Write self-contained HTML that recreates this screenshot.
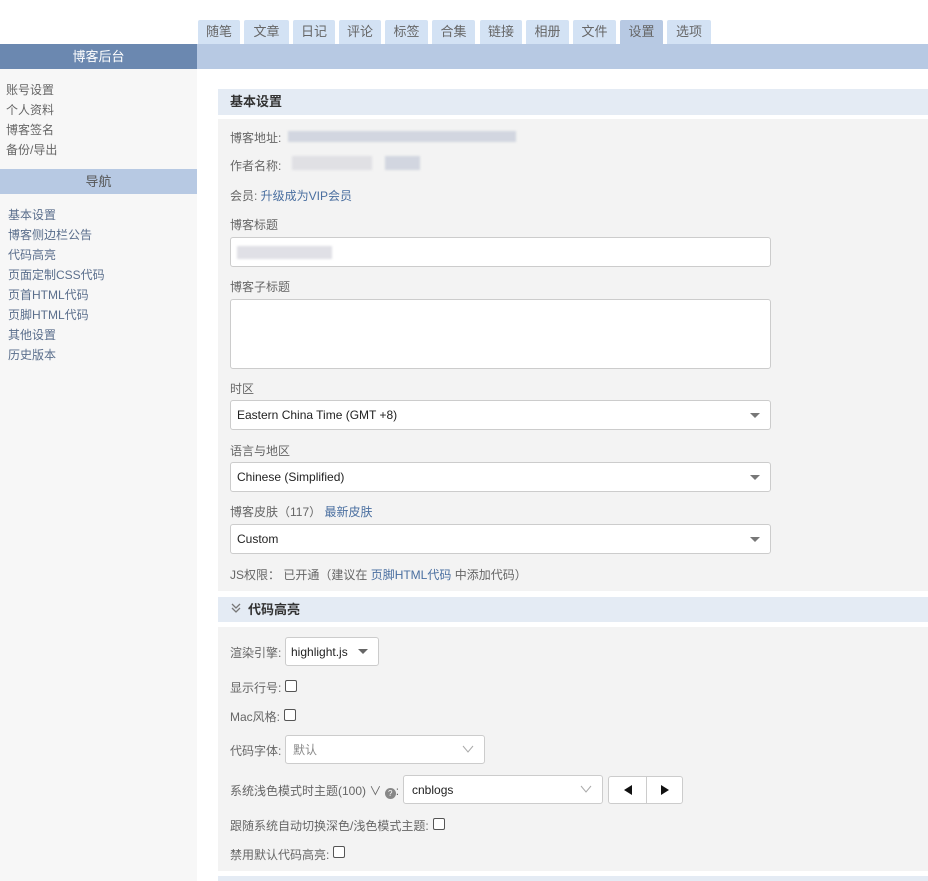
<!DOCTYPE html><html><head><meta charset="utf-8"><style>
*{margin:0;padding:0;box-sizing:border-box}
body{width:928px;height:881px;position:relative;background:#fff;font-family:"Liberation Sans","Noto Sans CJK SC",sans-serif;font-size:12px;color:#555;overflow:hidden}
.a{position:absolute}
.tab{position:absolute;top:20px;height:24px;width:42px;background:#d3e2f4;text-align:center;line-height:24px;font-size:13px;color:#666;border-radius:2px 2px 0 0}
.lk{position:absolute;left:6px;font-size:12px;color:#666}
.nv{position:absolute;left:8px;font-size:12px;color:#5a6e8c}
.lb{position:absolute;left:230px;font-size:12px;color:#666}
.in{position:absolute;left:230px;width:541px;height:30px;background:#fff;border:1px solid #ccc;border-radius:3px;font-size:12px;color:#222;padding-left:6px;line-height:28px}
.tri{position:absolute;right:10px;top:12px;width:0;height:0;border-left:5px solid transparent;border-right:5px solid transparent;border-top:5px solid #777}
.cb{position:absolute;width:12px;height:12px;border:1px solid #555;border-radius:2px;background:#fff}
.blur{position:absolute;background:#d2d6e0;filter:blur(1px)}
</style></head><body>
<div class="tab" style="left:198px">随笔</div><div class="tab" style="left:244px;width:45px">文章</div><div class="tab" style="left:293px">日记</div><div class="tab" style="left:339px">评论</div><div class="tab" style="left:385px;width:43px">标签</div><div class="tab" style="left:432px;width:43px">合集</div><div class="tab" style="left:480px">链接</div><div class="tab" style="left:526px;width:43px">相册</div><div class="tab" style="left:573px;width:43px">文件</div><div class="tab" style="left:620px;width:43px;background:#b7c9e3">设置</div><div class="tab" style="left:667px;width:44px">选项</div>
<div class="a" style="left:0;top:44px;width:197px;height:837px;background:#f7f7f7"></div>
<div class="a" style="left:0;top:44px;width:197px;height:25px;background:#6b88b0;color:#fff;text-align:center;line-height:25px;font-size:13px">博客后台</div>
<div class="a" style="left:197px;top:44px;width:731px;height:25px;background:#b7c9e3"></div>
<div class="lk" style="top:81px">账号设置</div><div class="lk" style="top:101px">个人资料</div><div class="lk" style="top:121px">博客签名</div><div class="lk" style="top:141px">备份/导出</div>
<div class="a" style="left:0;top:169px;width:197px;height:25px;background:#b7c9e3;color:#555;text-align:center;line-height:25px;font-size:13px">导航</div>
<div class="nv" style="top:206px">基本设置</div><div class="nv" style="top:226px">博客侧边栏公告</div><div class="nv" style="top:246px">代码高亮</div><div class="nv" style="top:266px">页面定制CSS代码</div><div class="nv" style="top:286px">页首HTML代码</div><div class="nv" style="top:306px">页脚HTML代码</div><div class="nv" style="top:326px">其他设置</div><div class="nv" style="top:346px">历史版本</div>
<div class="a" style="left:218px;top:89px;width:710px;height:26px;background:#e4ebf4;font-size:13px;font-weight:bold;color:#333;line-height:26px;padding-left:12px">基本设置</div>
<div class="a" style="left:218px;top:119px;width:710px;height:472px;background:#f3f3f3"></div>
<div class="lb" style="top:129px">博客地址:</div><div class="blur" style="left:288px;top:131px;width:228px;height:11px"></div>
<div class="lb" style="top:157px">作者名称:</div><div class="blur" style="left:292px;top:156px;width:80px;height:14px;background:#e0e0e4"></div><div class="blur" style="left:385px;top:156px;width:35px;height:14px"></div>
<div class="lb" style="top:187px">会员: <span style="color:#4a6fa0">升级成为VIP会员</span></div>
<div class="lb" style="top:216px">博客标题</div>
<div class="in" style="top:237px"><div class="blur" style="left:6px;top:8px;width:95px;height:13px;background:#e0e0e6"></div></div>
<div class="lb" style="top:278px">博客子标题</div>
<div class="in" style="top:299px;height:70px"></div>
<div class="lb" style="top:380px">时区</div>
<div class="in" style="top:400px">Eastern China Time (GMT +8)<div class="tri"></div></div>
<div class="lb" style="top:442px">语言与地区</div>
<div class="in" style="top:462px">Chinese (Simplified)<div class="tri"></div></div>
<div class="lb" style="top:503px">博客皮肤（117） <span style="color:#4a6fa0">最新皮肤</span></div>
<div class="in" style="top:524px">Custom<div class="tri"></div></div>
<div class="lb" style="top:566px">JS权限： 已开通（建议在 <span style="color:#4a6fa0">页脚HTML代码</span> 中添加代码）</div>
<div class="a" style="left:218px;top:597px;width:710px;height:25px;background:#e4ebf4;font-size:13px;font-weight:bold;color:#333;line-height:25px;padding-left:30px">代码高亮</div>
<svg class="a" style="left:230px;top:602px" width="12" height="12"><path d="M2 2l4 4 4-4M2 6l4 4 4-4" fill="none" stroke="#777" stroke-width="1.3"/></svg>
<div class="a" style="left:218px;top:627px;width:710px;height:244px;background:#f3f3f3"></div>
<div class="a" style="left:218px;top:876px;width:710px;height:5px;background:#e4ebf4"></div>
<div class="lb" style="top:644px">渲染引擎:</div>
<div class="in" style="top:637px;left:285px;width:94px;height:29px;font-size:12px;padding-left:5px">highlight.js<div class="tri" style="top:11px;border-top-color:#666"></div></div>
<div class="lb" style="top:679px">显示行号:</div><div class="cb" style="left:285px;top:680px"></div>
<div class="lb" style="top:708px">Mac风格:</div><div class="cb" style="left:284px;top:709px"></div>
<div class="lb" style="top:742px">代码字体:</div>
<div class="in" style="top:735px;left:285px;width:200px;height:29px;color:#888;padding-left:7px">默认<svg class="a" style="right:10px;top:9px" width="12" height="8"><path d="M1 1l5 6 5-6" fill="none" stroke="#aaa"/></svg></div>
<div class="lb" style="top:782px">系统浅色模式时主题(100) ∨ <span style="display:inline-block;width:11px;height:11px;border-radius:50%;background:#888;color:#fff;font-size:8px;text-align:center;line-height:11px;vertical-align:-1px">?</span>:</div>
<div class="in" style="top:775px;left:403px;width:200px;height:29px;padding-left:8px">cnblogs<svg class="a" style="right:10px;top:9px" width="12" height="8"><path d="M1 1l5 6 5-6" fill="none" stroke="#aaa"/></svg></div>
<div class="in" style="top:776px;left:608px;width:75px;height:28px;padding:0"><div class="a" style="left:37px;top:0;width:1px;height:26px;background:#ccc"></div><svg class="a" style="left:14px;top:8px" width="10" height="10"><path d="M9 0v10L1 5z" fill="#111"/></svg><svg class="a" style="left:51px;top:8px" width="10" height="10"><path d="M1 0v10L9 5z" fill="#111"/></svg></div>
<div class="lb" style="top:817px">跟随系统自动切换深色/浅色模式主题:</div><div class="cb" style="left:433px;top:818px"></div>
<div class="lb" style="top:846px">禁用默认代码高亮:</div><div class="cb" style="left:333px;top:846px"></div>
</body></html>
